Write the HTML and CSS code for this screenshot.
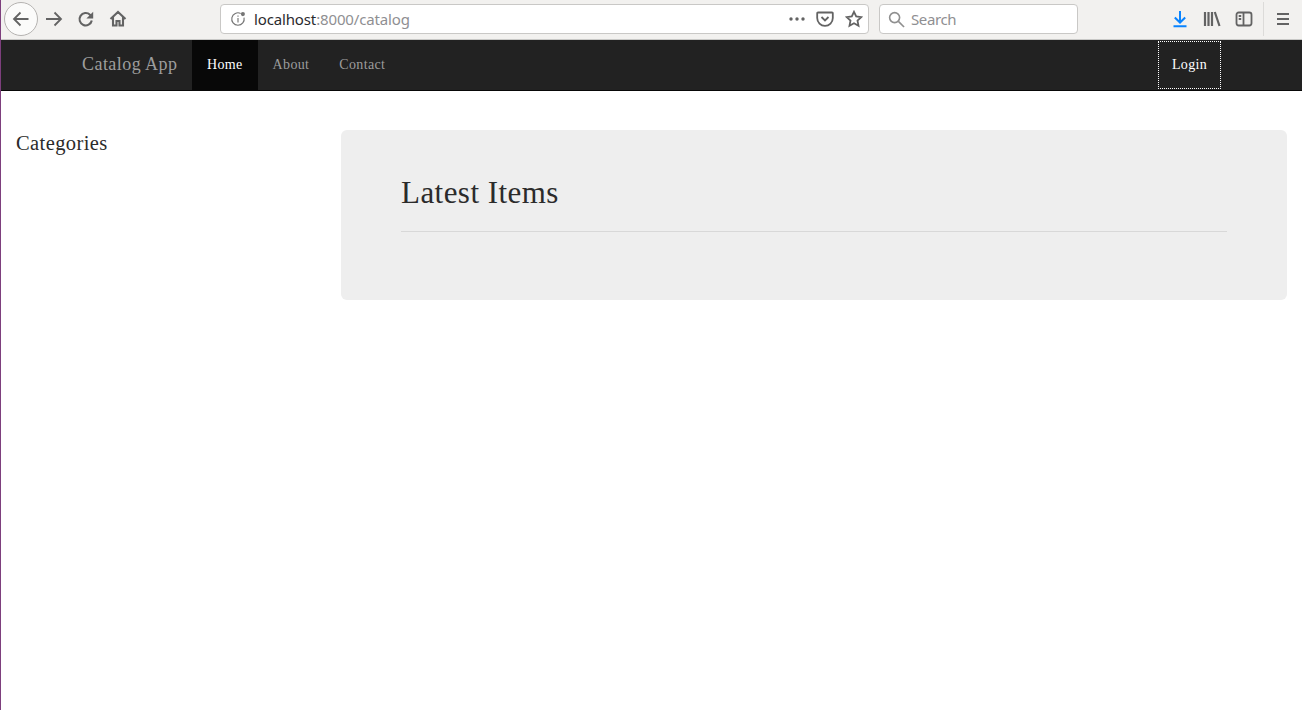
FILE: index.html
```html
<!DOCTYPE html>
<html lang="en">
<head>
<meta charset="utf-8">
<title>Catalog App</title>
<link rel="stylesheet" href="styles.css">
</head>
<body>
<header class="toolbar">
  <div class="back">
    <svg class="icon" viewBox="0 0 20 20"><path d="M17.5 10H3.5M9.5 3.5L3 10l6.500 6.500"/></svg>
  </div>
  <div class="nav-icons">
    <svg class="icon" viewBox="0 0 18 18"><path d="M1 9h15M9.500 2.500L16 9l-6.500 6.500"/></svg>
    <svg class="icon heavy" viewBox="0 0 18 18"><path d="M14.800 10.500a6.200 6.200 0 1 1-1.800-5.800L15 7"/><path class="fill" d="M16.200 1.800v6.800H9.400z"/></svg>
    <svg class="icon heavy" viewBox="0 0 18 18"><path d="M1.500 9L9 2l7.500 7M4 7v8.500h3.500V11h3v4.500H14V7"/></svg>
  </div>
  <div class="urlbar">
    <svg class="info" viewBox="0 0 18 18"><path d="M12 2.700A7 7 0 1 0 15.800 7.500"/><path d="M9 8v5M9 5v1.600"/><circle class="fill" cx="14.500" cy="3.500" r="2.300"/></svg>
    <span class="url"><span class="host">localhost</span>:8000/catalog</span>
    <span class="url-actions">
      <svg class="dots" viewBox="0 0 16 4"><circle cx="2" cy="2" r="1.700"/><circle cx="8" cy="2" r="1.700"/><circle cx="14" cy="2" r="1.700"/></svg>
      <svg class="icon pocket" viewBox="0 0 18 18"><path d="M2 2.500h14a.8.8 0 0 1 .8.800V8a7.800 7.800 0 0 1-15.600 0V3.300a.8.8 0 0 1 .8-.8z"/><path d="M5.500 7L9 10.500 12.500 7"/></svg>
      <svg class="icon star" viewBox="0 0 18 18"><path d="M9 1.800l2.200 4.700 5.100.6-3.800 3.500 1 5.100L9 13.200l-4.500 2.500 1-5.100L1.700 7.100l5.100-.6z"/></svg>
    </span>
  </div>
  <div class="searchbar">
    <svg class="glass" viewBox="0 0 18 18"><circle cx="7" cy="7" r="5.300"/><path d="M11 11l6 6"/></svg>
    <span>Search</span>
  </div>
  <div class="tools">
    <svg class="icon download" viewBox="0 0 18 18"><path d="M9 1v11M3.800 7.500L9 12.500l5.200-5M2.500 16.200h13"/></svg>
    <svg class="icon library" viewBox="0 0 18 18"><path d="M2 2v14M5.500 2v14M9 2v14M11.800 2l4.700 14"/></svg>
    <svg class="icon sidebar" viewBox="0 0 18 18"><rect x="1.500" y="2.500" width="15" height="13" rx="2.200"/><path d="M8.500 2.500v13M3.700 6h2.500M3.700 9h2.500"/></svg>
    <span class="sep"></span>
    <svg class="icon menu" viewBox="0 0 18 18"><path d="M3 4h12M3 9h12M3 14h12"/></svg>
  </div>
</header>
<nav class="navbar">
  <a class="brand" href="#">Catalog App</a>
  <ul class="links">
    <li class="active"><a href="#">Home</a></li>
    <li><a href="#">About</a></li>
    <li><a href="#">Contact</a></li>
  </ul>
  <a class="login" href="#">Login</a>
</nav>
<main class="content">
  <aside class="side"><h3>Categories</h3></aside>
  <section class="jumbo">
    <h2>Latest Items</h2>
    <hr>
  </section>
</main>
</body>
</html>
```
FILE: styles.css
```css
* { box-sizing: border-box; }
html, body { height: 100%; }
body {
  margin: 0;
  height: 710px;
  overflow: hidden;
  border-left: 1px solid #7d3f7d;
  background: #fff;
  font-family: "Liberation Serif", serif;
  color: #333;
}
.icon { width: 18px; height: 18px; fill: none; stroke: #636363; stroke-width: 1.8; flex: none; }
.heavy { stroke-width: 2.100; }
.fill { fill: #636363; stroke: none; }

.toolbar {
  height: 40px;
  display: flex;
  align-items: center;
  background: #f2f1ef;
  border-bottom: 1px solid #c8c8c6;
  padding: 0 0 1px 3px;
  font-family: "Noto Sans", sans-serif;
}
.back {
  width: 34px;
  height: 34px;
  flex: none;
  display: flex;
  align-items: center;
  justify-content: center;
  background: #fbfbfa;
  border: 1px solid #b5b3b1;
  border-radius: 50%;
}
.back .icon { width: 20px; height: 20px; }
.nav-icons {
  display: flex;
  gap: 14px;
  margin-left: 7px;
  width: 175px;
  flex: none;
}
.urlbar {
  width: 649px;
  height: 30px;
  flex: none;
  display: flex;
  align-items: center;
  background: #fff;
  border: 1px solid #c9c8c6;
  border-radius: 4px;
  padding-left: 9px;
  font-size: 15px;
  color: #8f8f92;
}
.info { width: 16px; height: 16px; fill: none; stroke: #757575; stroke-width: 1.300; flex: none; }
.info .fill { fill: #757575; }
.url { margin-left: 8px; letter-spacing: -0.14px; }
.host { color: #2a2a2e; }
.url-actions { margin-left: auto; display: flex; align-items: center; gap: 11px; padding-right: 5px; }
.dots { width: 16px; height: 4px; fill: #636363; }
.searchbar {
  width: 199px;
  height: 30px;
  margin-left: 10px;
  flex: none;
  display: flex;
  align-items: center;
  gap: 6px;
  background: #fff;
  border: 1px solid #c9c8c6;
  border-radius: 4px;
  padding-left: 8px;
  font-size: 15px;
  letter-spacing: -0.4px;
  color: #8f8f92;
}
.glass { width: 17px; height: 17px; fill: none; stroke: #8f8f8f; stroke-width: 1.700; }
.tools { flex: 1; display: flex; align-items: center; padding-left: 93px; }
.download { stroke: #0a84ff; stroke-width: 2; }
.library { margin-left: 14px; stroke-width: 2.200; }
.sidebar { margin-left: 14px; }
.sep { width: 1px; height: 34px; background: #dcdbd9; margin-left: 10px; }
.menu { margin-left: 10px; stroke-width: 2.200; }

.navbar {
  height: 51px;
  display: flex;
  align-items: stretch;
  background: #222;
  border-bottom: 1px solid #080808;
  padding-left: 66px;
  padding-right: 81px;
}
.navbar a { text-decoration: none; }
.brand {
  padding: 14px 15px 0;
  font-size: 18px;
  line-height: 20px;
  letter-spacing: 0.45px;
  color: #9d9d9d;
}
.links { display: flex; list-style: none; margin: 0; padding: 0; font-size: 14px; letter-spacing: 0.35px; }
.links a { display: block; height: 50px; padding: 15px 15.500px 15px 14.500px; line-height: 20px; color: #9d9d9d; }
.links .active a { background: #080808; color: #fff; }
.login {
  align-self: flex-start;
  margin: 1px 0 0 auto;
  height: 48px;
  width: 63px;
  padding-top: 13px;
  text-align: center;
  line-height: 20px;
  font-size: 14px;
  letter-spacing: 0.3px;
  color: #fff;
  border: 1px dotted #fff;
}

.content { display: flex; padding: 39px 15px 0; align-items: flex-start; }
.side { width: 325px; flex: none; }
.side h3 { margin: 2px 0 0; font-size: 20.500px; font-weight: 400; line-height: 22px; letter-spacing: 0.4px; color: #2b2b2b; }
.jumbo {
  flex: 1;
  height: 170px;
  padding: 46px 60px 0;
  background: #eee;
  border-radius: 6px;
}
.jumbo h2 { margin: 0; font-size: 31px; font-weight: 400; line-height: 33px; letter-spacing: 0.45px; color: #2b2b2b; }
.jumbo hr { margin: 22px 0 0; border: 0; border-top: 1px solid #d8d8d8; }
```
